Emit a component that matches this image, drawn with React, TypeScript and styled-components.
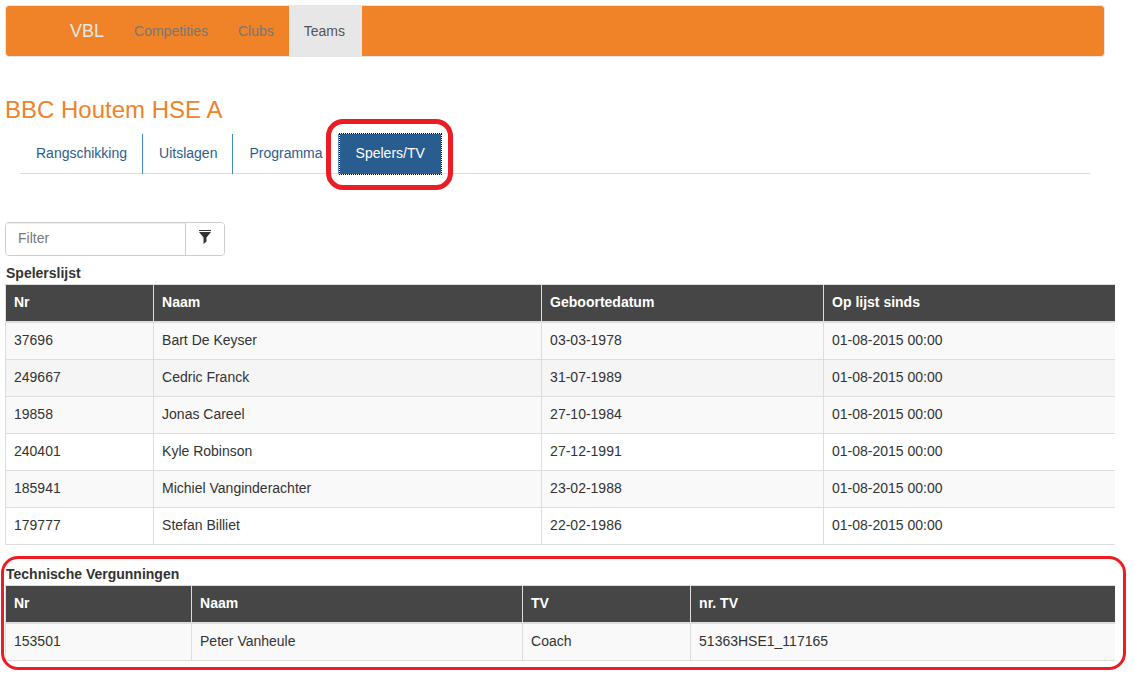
import React from "react";
import styled, { createGlobalStyle, css } from "styled-components";

const GlobalStyle = createGlobalStyle`
  *, *::before, *::after { box-sizing: border-box; }
  body {
    margin: 0;
    background: #fff;
    color: #333;
    font: 14px/20px "Liberation Sans", Arial, sans-serif;
  }
`;

const Page = styled.div`
  padding: 5px 20px 20px 5px;
`;

const Top = styled.header`
  margin-right: 10px;
`;

const Navbar = styled.nav`
  display: flex;
  height: 52px;
  padding-left: 49px;
  border: 1px solid #e7e7e7;
  border-radius: 4px;
  background: #f08228;
`;

const Brand = styled.a`
  padding: 15px;
  color: #e7e7e7;
  font-size: 18px;
  text-decoration: none;
`;

const NavLink = styled.a<{ $active?: boolean }>`
  padding: ${(p) => (p.$active ? "15px 17px 15px 15px" : "15px")};
  color: ${(p) => (p.$active ? "#555" : "#777")};
  background: ${(p) => (p.$active ? "#e7e7e7" : "transparent")};
  text-decoration: none;
`;

const Title = styled.h1`
  margin: 40px 0 12px;
  color: #f08228;
  font-size: 24px;
  line-height: 25px;
  font-weight: 400;
`;

const Tabs = styled.nav`
  display: flex;
  height: 40px;
  margin: 0 15px;
  border-bottom: 1px solid #ddd;
`;

const TabItem = styled.div`
  position: relative;
  height: 40px;
`;

const Tab = styled.a<{ $active?: boolean }>`
  display: block;
  height: 40px;
  padding: 9px 15px 11px 16px;
  color: #2a5d8f;
  text-decoration: none;
  border-right: 1px solid #428bca;
  ${(p) =>
    p.$active &&
    css`
      margin: 0 1px;
      padding-right: 16px;
      color: #fff;
      background: #2a5d8f;
      border-right: 0;
      outline: 1px dotted #000;
    `}
`;

const Marker = styled.div`
  position: absolute;
  border: solid #ed1c24;
  pointer-events: none;
`;

const TabMarker = styled(Marker)`
  inset: -15px -11px -16px -13px;
  border-width: 5px;
  border-radius: 17px;
`;

const SectionMarker = styled(Marker)`
  inset: -9px -11px -9px -4px;
  border-width: 3px;
  border-radius: 17px;
`;

const FilterBar = styled.form`
  display: flex;
  width: 220px;
  height: 34px;
  margin: 48px 0 8px;
  border: 1px solid #ccc;
  border-radius: 4px;
  overflow: hidden;
`;

const FilterInput = styled.input`
  flex: 1;
  min-width: 0;
  padding: 0 12px 2px;
  border: 0;
  outline: 0;
  color: #555;
  font: inherit;
  box-shadow: inset 0 1px 1px rgba(0, 0, 0, 0.075);
  &::placeholder { color: #777; opacity: 1; }
`;

const FilterButton = styled.button`
  display: flex;
  justify-content: center;
  width: 39px;
  padding: 7px 0 0;
  border: 0;
  border-left: 1px solid #ccc;
  background: #fff;
  color: #333;
`;

const Section = styled.section`
  position: relative;
  margin-bottom: 20px;
`;

const Table = styled.table`
  width: 100%;
  table-layout: fixed;
  border-spacing: 0;
  border-top: 1px solid #ddd;

  caption {
    padding: 0 0 2px 1px;
    line-height: 18px;
    text-align: left;
    font-weight: 700;
  }
  th, td {
    padding: 7px 8px 9px;
    text-align: left;
    border-left: 1px solid #ddd;
    border-bottom: 1px solid #ddd;
  }
  th {
    color: #fff;
    background: #464646;
    border-bottom-width: 2px;
  }
`;

const Row = styled.tr<{ $hovered?: boolean }>`
  &:nth-child(odd) { background: #f9f9f9; }
  ${(p) => p.$hovered && css`background: #f5f5f5;`}
`;

type DataTableProps = {
  title: string;
  columns: { label: string; width?: string }[];
  rows: string[][];
  hovered?: number;
};

const DataTable = ({ title, columns, rows, hovered }: DataTableProps) => (
  <Table>
    <caption>{title}</caption>
    <colgroup>
      {columns.map((c) => (
        <col key={c.label} width={c.width} />
      ))}
    </colgroup>
    <thead>
      <tr>
        {columns.map((c) => (
          <th key={c.label} scope="col">{c.label}</th>
        ))}
      </tr>
    </thead>
    <tbody>
      {rows.map((row, i) => (
        <Row key={row[0]} $hovered={i === hovered}>
          {row.map((cell, j) => (
            <td key={j}>{cell}</td>
          ))}
        </Row>
      ))}
    </tbody>
  </Table>
);

const playerColumns = [
  { label: "Nr", width: "13.34%" },
  { label: "Naam", width: "34.96%" },
  { label: "Geboortedatum", width: "25.4%" },
  { label: "Op lijst sinds" },
];

const players = [
  ["37696", "Bart De Keyser", "03-03-1978"],
  ["249667", "Cedric Franck", "31-07-1989"],
  ["19858", "Jonas Careel", "27-10-1984"],
  ["240401", "Kyle Robinson", "27-12-1991"],
  ["185941", "Michiel Vanginderachter", "23-02-1988"],
  ["179777", "Stefan Billiet", "22-02-1986"],
].map((p) => [...p, "01-08-2015 00:00"]);

const licenseColumns = [
  { label: "Nr", width: "16.76%" },
  { label: "Naam", width: "29.82%" },
  { label: "TV", width: "15.14%" },
  { label: "nr. TV" },
];

const licenses = [["153501", "Peter Vanheule", "Coach", "51363HSE1_117165"]];

export default function App() {
  return (
    <>
      <GlobalStyle />
      <Page>
        <Top>
          <Navbar aria-label="Hoofdmenu">
            <Brand href="#">VBL</Brand>
            <NavLink href="#competities">Competities</NavLink>
            <NavLink href="#clubs">Clubs</NavLink>
            <NavLink href="#teams" $active aria-current="page">Teams</NavLink>
          </Navbar>
          <Title>BBC Houtem HSE A</Title>
          <Tabs aria-label="Team">
            <TabItem><Tab href="#rangschikking">Rangschikking</Tab></TabItem>
            <TabItem><Tab href="#uitslagen">Uitslagen</Tab></TabItem>
            <TabItem><Tab href="#programma">Programma</Tab></TabItem>
            <TabItem>
              <Tab href="#spelers" $active aria-current="page">Spelers/TV</Tab>
              <TabMarker />
            </TabItem>
          </Tabs>
        </Top>
        <main>
          <FilterBar onSubmit={(e) => e.preventDefault()}>
            <FilterInput type="text" placeholder="Filter" aria-label="Filter" />
            <FilterButton type="submit" aria-label="Filteren">
              <svg width="12" height="14" viewBox="0 0 12 14" fill="currentColor" aria-hidden="true">
                <path d="M0 0H12V1H0ZM0 2H12L7.5 7.5V11.5L4.5 14V7.5Z" />
              </svg>
            </FilterButton>
          </FilterBar>
          <Section>
            <DataTable title="Spelerslijst" columns={playerColumns} rows={players} hovered={1} />
          </Section>
          <Section>
            <DataTable title="Technische Vergunningen" columns={licenseColumns} rows={licenses} />
            <SectionMarker />
          </Section>
        </main>
      </Page>
    </>
  );
}
